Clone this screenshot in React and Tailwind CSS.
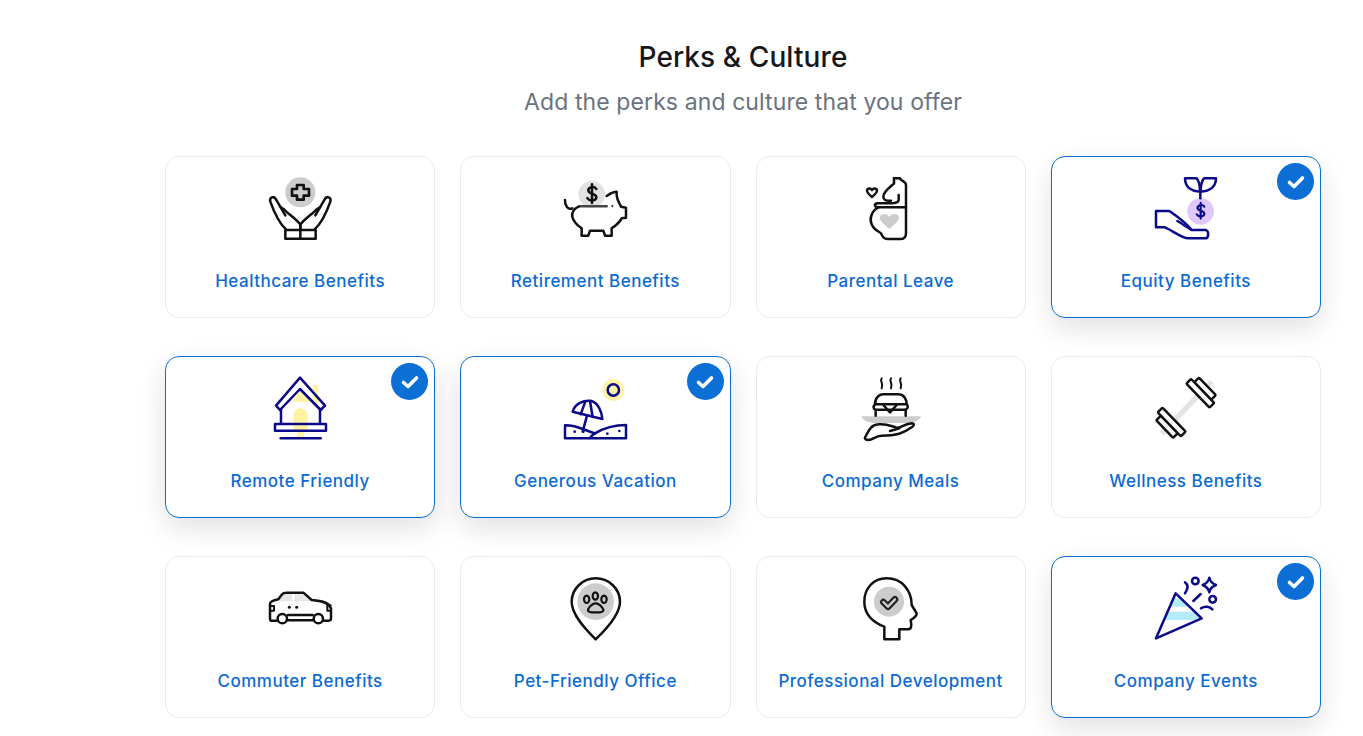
const INK = '#111111'
const NAVY = '#0b0b8a'

function Dollar({ x, y, s = 1, color }) {
  return (
    <g transform={`translate(${x} ${y}) scale(${s})`} fill="none" stroke={color} strokeWidth="7.5" strokeLinecap="round">
      <path d="M13 -14 C6 -24 -12 -20 -11 -9 C-10 2 13 -2 13 11 C13 22 -8 24 -14 13" />
      <path d="M0 -28 V28" />
    </g>
  )
}

function Icon({ box, color = INK, children }) {
  return (
    <svg viewBox={box} className="w-[110px] h-[85px] shrink-0" fill="none" stroke={color} strokeWidth="7.5" strokeLinecap="round" strokeLinejoin="round">
      {children}
    </svg>
  )
}

function Healthcare() {
  return (
    <Icon box="255 45 330 255">
      <circle cx="421" cy="127" r="45" fill="#cccccc" stroke="none" />
      <path d="M411 105 H431 V117 H447 V137 H431 V149 H411 V137 H396 V117 H411 Z" strokeWidth="8" />
      <path d="M378 238 C360 222 345 195 331 155 C327 142 342 136 348 148 L376 196" />
      <path d="M362 172 L372 178 C385 192 410 208 421 224 V238" />
      <g transform="translate(842 0) scale(-1 1)">
        <path d="M378 238 C360 222 345 195 331 155 C327 142 342 136 348 148 L376 196" />
        <path d="M362 172 L372 178 C385 192 410 208 421 224 V238" />
      </g>
      <rect x="376" y="240" width="91" height="26" />
      <path d="M421 240 V266" />
    </Icon>
  )
}

function Piggy() {
  return (
    <Icon box="0 0 330 255">
      <circle cx="155" cy="88" r="40" fill="#e2e2e2" stroke="none" />
      <Dollar x={156} y={86} color={INK} />
      <path d="M118 124 H200" stroke="#444444" />
      <path d="M75 105 C74 122 84 136 97 130" />
      <path d="M116 125 C100 130 95 145 97 155 C100 170 115 183 125 190 V212 H145 L150 197 H190 L195 212 H215 V190 C230 180 240 170 245 160 L258 158 V128 L243 125 C237 112 228 103 230 80 C215 80 205 90 200 93" />
      <circle cx="217" cy="123" r="3" fill={INK} stroke="none" />
    </Icon>
  )
}

function Parental() {
  return (
    <Icon box="0 0 330 255">
      <path d="M160 192 C140 175 130 165 131 157 C133 145 152 143 160 155 C168 143 187 145 189 157 C190 165 180 175 160 192 Z" fill="#cccccc" stroke="none" />
      <path d="M108 96 C95 85 92 80 93 76 C95 68 104 69 108 75 C112 69 121 68 123 76 C124 80 121 85 108 96 Z" />
      <path d="M174 40 H192 C194 48 210 48 210 60 V205 C210 215 205 222 195 222 H155 C142 222 140 215 135 205 C128 198 112 195 106 175 C100 160 108 135 128 127 H210" />
      <path d="M174 40 V56 C160 68 142 80 142 95 C142 105 150 108 165 107" />
      <path d="M188 90 V105 C188 115 175 115 125 115 C112 115 115 127 128 127" />
    </Icon>
  )
}

function Equity() {
  return (
    <Icon box="3 45 330 255" color={NAVY}>
      <circle cx="212" cy="184" r="40" fill="#e0c9fa" stroke="none" />
      <Dollar x={212} y={182} s={0.85} color={NAVY} />
      <path d="M165 85 H200 C208 95 210 110 210 124 C190 126 165 115 165 85 Z" />
      <path d="M258 85 H222 C213 95 212 110 212 124 C232 126 258 115 258 85 Z" />
      <path d="M211 124 V145" />
      <path d="M78 183 H118 C135 195 165 215 185 240 H228 C238 245 236 265 226 265 H175 C155 265 125 240 105 232 H78 Z" />
      <path d="M142 213 C155 220 175 235 185 240" />
    </Icon>
  )
}

function Remote() {
  return (
    <Icon box="-15 0 330 255" color={NAVY}>
      <path d="M188 60 H205 V130 L150 75 L128 110 H188 Z" fill="#fff3a3" stroke="none" />
      <path d="M130 152 C130 122 172 122 172 152 V197 H162 V215 H140 V197 H130 Z" fill="#fff3a3" stroke="none" />
      <path d="M150 38 L225 122 L212 135 L150 72 L90 135 L78 122 Z" />
      <path d="M93 132 V176 M210 132 V176" />
      <rect x="75" y="177" width="153" height="20" />
      <path d="M92 220 H212" />
    </Icon>
  )
}

function Vacation() {
  return (
    <Icon box="0 0 330 255" color={NAVY}>
      <circle cx="220" cy="75" r="33" fill="#fff3a3" stroke="none" />
      <circle cx="220" cy="75" r="17" />
      <path d="M98 140 C105 115 130 105 155 108 C175 115 185 140 187 162 Z" />
      <path d="M135 112 L122 148 M150 108 L158 156" />
      <path d="M141 152 L128 200" />
      <path d="M75 181 C110 180 130 195 165 205 C190 190 220 180 258 180 V220 H75 Z" />
      <path d="M150 219 C155 212 158 208 165 205" />
      <g fill={NAVY} stroke="none">
        <circle cx="104" cy="200" r="4" />
        <circle cx="130" cy="200" r="4" />
        <circle cx="202" cy="206" r="4" />
        <circle cx="238" cy="198" r="4" />
      </g>
    </Icon>
  )
}

function Meals() {
  return (
    <Icon box="-12 0 330 255">
      <path d="M64 154 H243 C240 165 225 172 210 174 H100 C80 172 68 165 64 154 Z" fill="#cccccc" stroke="none" />
      <path d="M125 40 C118 48 132 54 125 70 M153 40 C146 48 160 54 153 70 M182 40 C175 48 189 54 182 70" strokeWidth="6" />
      <path d="M105 118 C105 95 120 88 130 88 H175 C190 88 200 100 200 118 Z" />
      <path d="M105 118 C98 125 100 132 107 134 H197 C205 130 205 122 200 118" />
      <path d="M107 135 V152 M197 135 V152" />
      <path d="M130 120 L150 142 L170 120" />
      <path d="M75 218 C85 200 90 180 115 178 C135 175 150 182 170 188 C180 190 190 178 215 175 C225 175 222 183 215 187 C190 205 170 212 125 212 C105 212 100 225 85 225 C78 225 73 222 75 218 Z" />
      <path d="M150 198 L178 190" />
    </Icon>
  )
}

function Plate({ cx, cy, length }) {
  return <rect x={-length / 2} y="-10" width={length} height="20" rx="3" fill="#ffffff" transform={`translate(${cx} ${cy}) rotate(46)`} />
}

function Wellness() {
  return (
    <Icon box="3 0 330 255">
      <path d="M95 205 L245 50" stroke="#e4e4e4" strokeWidth="16" strokeLinecap="butt" />
      <Plate cx={225} cy={71} length={73} />
      <Plate cx={211} cy={85} length={100} />
      <Plate cx={111} cy={185} length={73} />
      <Plate cx={125} cy={171} length={100} />
    </Icon>
  )
}

function Commuter() {
  return (
    <Icon box="-15 -15 330 255">
      <path d="M86 94 L100 73 H127 V94 Z M133 73 H158 L182 94 H133 Z" fill="#e6e6e6" stroke="none" />
      <path d="M80 152 H62 C60 150 60 148 60 145 V102 C60 92 75 90 85 88 L97 72 C100 68 105 68 110 68 H160 L185 90 C200 92 235 92 243 115 V145 C243 150 240 152 236 152 H222" />
      <path d="M62 108 H72 V122 H62 M242 106 H232 V122 H242" strokeWidth="6" />
      <path d="M114 135 H188 M114 151 H188" />
      <circle cx="97" cy="146" r="14" fill="#ffffff" />
      <circle cx="205" cy="146" r="14" fill="#ffffff" />
      <g fill={INK} stroke="none">
        <circle cx="118" cy="112" r="4.5" />
        <circle cx="140" cy="112" r="4.5" />
      </g>
    </Icon>
  )
}

function PetFriendly() {
  return (
    <Icon box="0 -15 330 255">
      <circle cx="167" cy="95" r="55" fill="#cccccc" stroke="none" />
      <path d="M167 208 C150 190 95 140 95 95 C95 55 130 25 167 25 C205 25 240 55 240 95 C240 140 185 190 167 208 Z" />
      <g strokeWidth="6.5">
        <ellipse cx="140" cy="88" rx="8" ry="11" />
        <ellipse cx="166" cy="78" rx="8" ry="11" />
        <ellipse cx="192" cy="88" rx="8" ry="11" />
        <path d="M167 100 C155 100 150 110 146 115 C140 123 148 127 155 127 H179 C186 127 194 123 188 115 C184 110 179 100 167 100 Z" />
      </g>
    </Icon>
  )
}

function Development() {
  return (
    <Icon box="-12 -15 330 255">
      <circle cx="147" cy="95" r="45" fill="#cccccc" stroke="none" />
      <path d="M133 170 V208 H178 V178 H205 C215 178 215 165 212 150 C222 145 232 135 230 130 L215 105 C215 60 185 25 140 25 C100 25 73 55 73 95 C73 130 95 155 133 170 Z" />
      <path d="M130 96 L144 110 L165 88" stroke="#222222" strokeWidth="20" />
      <path d="M130 96 L144 110 L165 88" stroke="#cccccc" strokeWidth="7" />
    </Icon>
  )
}

function Events() {
  return (
    <Icon box="3 0 330 255" color={NAVY}>
      <path d="M130 100 H153 L179 125 H119 Z" fill="#b5ecfb" stroke="none" />
      <path d="M113 140 H194 L215 160 L203 165 H102 Z" fill="#b5ecfb" stroke="none" />
      <path d="M78 220 L137 85 L215 160 Z" />
      <path d="M165 52 C178 62 172 75 165 85" />
      <circle cx="196" cy="48" r="10" />
      <path d="M238 38 C240 50 245 55 258 60 C245 65 240 70 238 82 C236 70 230 65 218 60 C230 55 236 50 238 38 Z" />
      <path d="M190 108 L212 87" />
      <circle cx="248" cy="103" r="10" />
      <path d="M213 130 C225 122 240 125 247 133" />
    </Icon>
  )
}

const PERKS = [
  { label: 'Healthcare Benefits', icon: Healthcare },
  { label: 'Retirement Benefits', icon: Piggy },
  { label: 'Parental Leave', icon: Parental },
  { label: 'Equity Benefits', icon: Equity, selected: true },
  { label: 'Remote Friendly', icon: Remote, selected: true },
  { label: 'Generous Vacation', icon: Vacation, selected: true },
  { label: 'Company Meals', icon: Meals },
  { label: 'Wellness Benefits', icon: Wellness },
  { label: 'Commuter Benefits', icon: Commuter },
  { label: 'Pet-Friendly Office', icon: PetFriendly },
  { label: 'Professional Development', icon: Development },
  { label: 'Company Events', icon: Events, selected: true },
]

function PerkCard({ label, icon: Icon, selected }) {
  return (
    <div className={`relative h-[162px] flex flex-col items-center pt-2 rounded-[14px] border bg-white ${selected ? 'border-[#0b6fd6] shadow-[0_10px_28px_rgba(0,0,0,0.12)]' : 'border-[#eaecee]'}`}>
      <Icon />
      <p className="mt-[19px] text-[17px] leading-6 font-medium tracking-[0.5px] text-[#0b6bd3]">{label}</p>
      {selected && (
        <span className="absolute top-[6px] right-[6px] w-[37px] h-[37px] rounded-full bg-[#0b6fd6] flex items-center justify-center">
          <svg viewBox="0 0 20 20" className="w-5 h-5" fill="none" stroke="#ffffff" strokeWidth="3.6" strokeLinecap="round" strokeLinejoin="round">
            <path d="M3.5 10.5 L8 14.5 L16.5 6" />
          </svg>
        </span>
      )}
    </div>
  )
}

export default function App() {
  return (
    <div className="h-[736px] overflow-hidden bg-white font-['Inter','Noto_Sans',sans-serif]">
      <div className="ml-[165px] w-[1156px]">
        <div className="pt-[39px] text-center">
          <h1 className="text-[28px] leading-9 font-medium tracking-[0.1px] text-[#15171c]">Perks &amp; Culture</h1>
          <p className="mt-[11px] text-[23px] leading-8 tracking-[0.1px] font-normal text-[#6b7280]">Add the perks and culture that you offer</p>
        </div>
        <div className="mt-[38px] grid grid-cols-4 gap-x-[25px] gap-y-[38px]">
          {PERKS.map(perk => (
            <PerkCard key={perk.label} {...perk} />
          ))}
        </div>
      </div>
    </div>
  )
}
